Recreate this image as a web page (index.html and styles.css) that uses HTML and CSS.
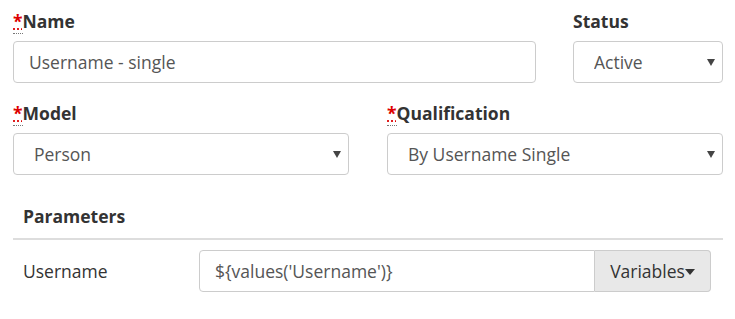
FILE: index.html
```html
<!DOCTYPE html>
<html lang="en">
<head>
  <meta charset="UTF-8">
  <title>Qualification rule</title>
  <link rel="stylesheet" href="styles.css">
</head>
<body>
  <div id="form">
    <div class="row rowTop">
      <div class="field">
        <label><abbr title="required">*</abbr>Name</label>
        <input class="control" type="text" value="Username - single">
      </div>
      <div class="field">
        <label>Status</label>
        <div class="selectWrap">
          <select class="control select">
            <option>Active</option>
            <option>Inactive</option>
          </select>
        </div>
      </div>
    </div>

    <div class="row rowMid">
      <div class="field">
        <label><abbr title="required">*</abbr>Model</label>
        <div class="selectWrap">
          <select class="control select">
            <option>Person</option>
          </select>
        </div>
      </div>
      <div class="field">
        <label><abbr title="required">*</abbr>Qualification</label>
        <div class="selectWrap">
          <select class="control select">
            <option>By Username Single</option>
          </select>
        </div>
      </div>
    </div>

    <div id="params">
      <div class="paramsHead">Parameters</div>
      <div class="paramRow">
        <div class="paramLabel">Username</div>
        <div class="inputGroup">
          <input class="control groupInput" type="text" value="${values('Username')}">
          <button class="groupBtn">Variables<span class="caret"></span></button>
        </div>
      </div>
    </div>
  </div>
</body>
</html>
```

FILE: styles.css
```css
body {
  margin: 0;
  background-color: white;
  font-family: "Open Sans", "DejaVu Sans", sans-serif;
  color: #333;
}

#form {
  padding: 9px 12px 0 13px;
}

.row {
  display: grid;
}

.rowTop {
  grid-template-columns: 523px 150px;
  column-gap: 37px;
}

.rowMid {
  grid-template-columns: 1fr 1fr;
  column-gap: 38px;
  margin-top: 18px;
}

.field label {
  display: block;
  font-size: 17.5px;
  font-weight: bold;
  line-height: 24px;
  margin-bottom: 8px;
}

abbr {
  color: #d00;
  text-decoration: underline dotted;
  border-bottom: 1px dotted #777;
  cursor: help;
}

.control {
  display: block;
  box-sizing: border-box;
  width: 100%;
  height: 42px;
  margin: 0;
  padding: 0 15px;
  border: 1px solid #ccc;
  border-radius: 4px;
  background-color: white;
  font-family: "Open Sans", "DejaVu Sans", sans-serif;
  font-size: 17.5px;
  color: #555;
  outline: none;
}

.selectWrap {
  position: relative;
}

.select {
  appearance: none;
  -webkit-appearance: none;
  padding-left: 20px;
}

.selectWrap::after {
  content: "";
  position: absolute;
  right: 8px;
  top: 50%;
  margin-top: -3px;
  border-top: 7px solid #444;
  border-left: 4px solid transparent;
  border-right: 4px solid transparent;
  pointer-events: none;
}

#params {
  margin-top: 29px;
}

.paramsHead {
  font-size: 17.5px;
  font-weight: bold;
  line-height: 24px;
  padding: 0 10px 10px;
  border-bottom: 2px solid #ddd;
}

.paramRow {
  display: grid;
  grid-template-columns: 186px 512px;
  align-items: center;
  margin-top: 10px;
}

.paramLabel {
  padding-left: 10px;
  font-size: 17.5px;
  line-height: 24px;
}

.inputGroup {
  display: flex;
}

.groupInput {
  flex: 1;
  border-radius: 4px 0 0 4px;
}

.groupBtn {
  width: 116px;
  height: 42px;
  padding: 0;
  border: 1px solid #ccc;
  border-left: none;
  border-radius: 0 4px 4px 0;
  background-color: #e8e8e8;
  font-family: "Open Sans", "DejaVu Sans", sans-serif;
  font-size: 17.5px;
  color: #333;
}

.caret {
  display: inline-block;
  vertical-align: middle;
  margin-top: -2px;
  border-top: 6px solid #333;
  border-left: 5px solid transparent;
  border-right: 5px solid transparent;
}
```
